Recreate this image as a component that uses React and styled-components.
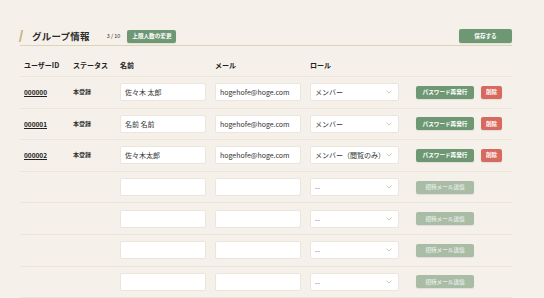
import React from 'react'
import styled, { createGlobalStyle } from 'styled-components'

const GlobalStyle = createGlobalStyle`
  html, body {
    margin: 0;
    padding: 0;
    background: #f5f0ea;
    font-family: "Noto Sans CJK JP", "Noto Sans", sans-serif;
    color: #2b2b2b;
  }
  * { box-sizing: border-box; }
`;

const Page = styled.div`
  width: 544px;
  height: 298px;
  overflow: hidden;
  padding: 27px 32px 0 20px;
`;

const Header = styled.div`
  display: flex;
  align-items: center;
  height: 18px;
`;

const Accent = styled.span`
  width: 2px;
  height: 12px;
  background: #cdb98a;
  margin-right: 10px;
  transform: skewX(-12deg);
`;

const Title = styled.h1`
  margin: 0;
  font-size: 9.5px;
  font-weight: 700;
  letter-spacing: 0.2px;
`;

const Count = styled.span`
  font-size: 5.5px;
  margin-left: 17px;
  margin-right: 7px;
  color: #333;
`;

const Spacer = styled.div`
  flex: 1;
`;

const Button = styled.button`
  border: none;
  border-radius: 2px;
  font-family: inherit;
  font-weight: 700;
  font-size: 5.6px;
  padding: 0;
  height: ${p => p.h || 13}px;
  width: ${p => p.w}px;
  background: ${p => p.bg || '#6e9873'};
  box-shadow: 0 1px 1px rgba(0,0,0,0.08);
  color: ${p => (p.disabled ? '#e3e9e1' : '#fff')};
  white-space: nowrap;
  display: flex;
  align-items: center;
  justify-content: center;
`;

const Rule = styled.div`
  height: 1px;
  background: #ddd4b8;
`;

const Grid = styled.div`
  display: grid;
  grid-template-columns: 49px 47px 95px 95px 106px 1fr;
  padding-left: 4px;
  align-items: center;
  height: ${p => p.h || 31.6}px;
  border-bottom: 1px solid #ebe5dc;
`;

const HeadRow = styled(Grid)`
  align-items: end;
  padding-bottom: 7px;
`;

const HeadCell = styled.div`
  font-size: 7px;
  font-weight: 700;
  color: #222;
  line-height: 1;
`;

const Cell = styled.div`
  display: flex;
  align-items: center;
  line-height: 1;
`;

const IdLink = styled.a`
  font-size: 6.5px;
  font-weight: 700;
  color: #222;
  text-decoration: underline;
`;

const Status = styled.span`
  font-size: 6px;
  font-weight: 700;
  color: #333;
`;

const Input = styled.div`
  width: ${p => p.w || 86}px;
  height: 18px;
  background: #fff;
  border: 1px solid #ebe5dd;
  border-radius: 2px;
  font-size: 7px;
  padding-left: 4px;
  display: flex;
  align-items: center;
  color: #333;
  white-space: nowrap;
  overflow: hidden;
`;

const Select = styled(Input)`
  width: 89px;
  justify-content: space-between;
  padding-right: 6px;
  color: ${p => (p.empty ? '#777' : '#333')};
`;

const Actions = styled.div`
  display: flex;
  gap: 7px;
  align-items: center;
`;

const Chevron = () => (
  <svg width="6" height="4" viewBox="0 0 6 4">
    <path d="M0.5 0.5 L3 3 L5.5 0.5" fill="none" stroke="#c9c1a3" strokeWidth="0.8" />
  </svg>
);

const users = [
  { id: '000000', name: '佐々木 太郎', role: 'メンバー' },
  { id: '000001', name: '名前 名前', role: 'メンバー' },
  { id: '000002', name: '佐々木太郎', role: 'メンバー（閲覧のみ）' },
];

export default function App() {
  return (
    <Page>
      <GlobalStyle />
      <Header>
        <Accent />
        <Title>グループ情報</Title>
        <Count>3 / 10</Count>
        <Button w={49}>上限人数の変更</Button>
        <Spacer />
        <Button w={53} h={14}>保存する</Button>
      </Header>
      <Rule />
      <HeadRow h={31}>
        <HeadCell>ユーザーID</HeadCell>
        <HeadCell>ステータス</HeadCell>
        <HeadCell>名前</HeadCell>
        <HeadCell>メール</HeadCell>
        <HeadCell>ロール</HeadCell>
        <div />
      </HeadRow>
      {users.map(u => (
        <Grid key={u.id}>
          <Cell><IdLink>{u.id}</IdLink></Cell>
          <Cell><Status>本登録</Status></Cell>
          <Input>{u.name}</Input>
          <Input>hogehofe@hoge.com</Input>
          <Select>{u.role}<Chevron /></Select>
          <Actions>
            <Button w={58}>パスワード再発行</Button>
            <Button w={21} bg="#d7695e">削除</Button>
          </Actions>
        </Grid>
      ))}
      {[0, 1, 2, 3].map(i => (
        <Grid key={i}>
          <div />
          <div />
          <Input />
          <Input />
          <Select empty>--<Chevron /></Select>
          <Actions>
            <Button w={58} bg="#a9bca6" disabled>招待メール送信</Button>
          </Actions>
        </Grid>
      ))}
    </Page>
  )
}
